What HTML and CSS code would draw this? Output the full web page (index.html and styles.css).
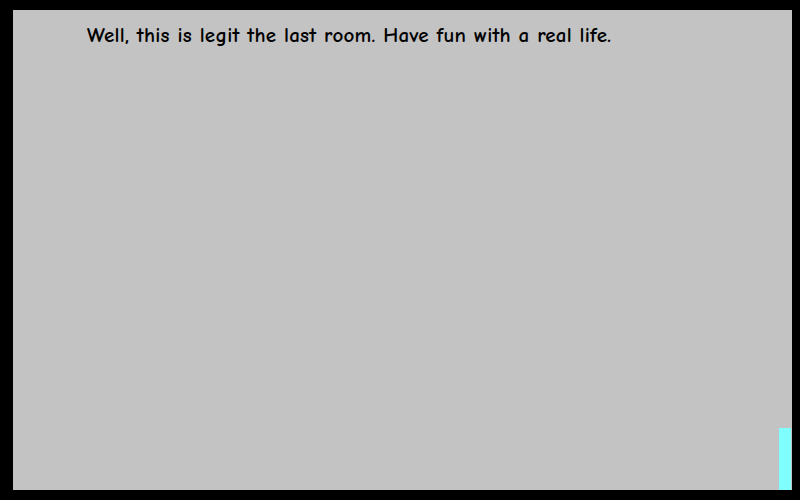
FILE: index.html
```html
<!DOCTYPE html>
<html>
<head>
<meta charset="utf-8">
<link rel="stylesheet" href="styles.css">
</head>
<body>
<div class="frame">
  <div class="room">
    <p class="message">Well, this is legit the last room. Have fun with a real life.</p>
    <div class="door"></div>
  </div>
</div>
</body>
</html>
```
FILE: styles.css
```css
html, body {
  margin: 0;
  padding: 0;
  background: #000000;
  width: 800px;
  height: 500px;
  overflow: hidden;
}
.frame {
  padding: 10px 8px 10px 13px;
}
.room {
  position: relative;
  width: 779px;
  height: 480px;
  background: #c3c3c3;
}
.message {
  margin: 0;
  padding: 12px 0 0 74px;
  font-family: "Comic Sans MS", "Comic Neue", "Open Sans", sans-serif;
  font-size: 21px;
  font-weight: 700;
  letter-spacing: 0.23px;
  line-height: 26px;
  color: #000000;
  white-space: nowrap;
}
.door {
  position: absolute;
  left: 766px;
  top: 418px;
  width: 12px;
  height: 62px;
  background: #80ffff;
}
```
